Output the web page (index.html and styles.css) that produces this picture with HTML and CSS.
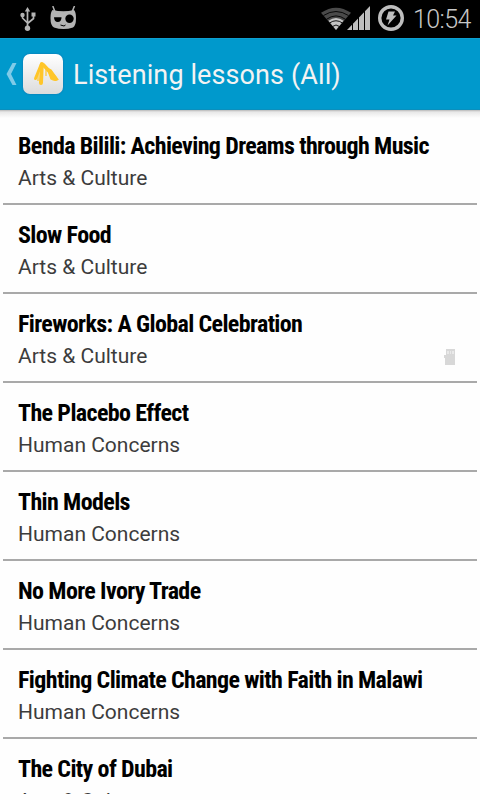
FILE: index.html
```
<!DOCTYPE html>
<html lang="en">
<head>
  <meta charset="UTF-8">
  <meta name="viewport" content="width=device-width, initial-scale=1.0">
  <title>Listening lessons</title>
  <link rel="stylesheet" href="styles.css">
</head>
<body>
  <div class="screen">
    <div class="status-bar">
      <svg class="usb" width="18" height="26" viewBox="0 0 18 26">
        <path d="M7.500 4v17M2.500 9.500v2.500l5 5M13.500 9v3.500l-6 5" fill="none" stroke="#b4b4b4" stroke-width="1.700"/>
        <path d="M7.500 1l2.700 4.500H4.800zM11.500 6.500h4v4h-4z" fill="#b4b4b4"/>
        <circle cx="2.500" cy="9" r="2.200" fill="#b4b4b4"/>
        <circle cx="7.500" cy="22.300" r="2.700" fill="#b4b4b4"/>
      </svg>
      <svg class="cid" width="28" height="26" viewBox="0 0 28 26">
        <path d="M2.800 0l2.200 6M24.500 0l-2.500 6" stroke="#b4b4b4" stroke-width="1.500"/>
        <path d="M2.500 4Q13.500 6.500 24 4Q26 6 26 12Q26 20 23 21.500Q13.500 24.500 4 21.500Q.5 20 .5 12Q.5 6 2.500 4z" fill="#b4b4b4"/>
        <path d="M4 11.300h7.500q0 4.700-3.700 4.700T4 11.300z" fill="#000"/>
        <circle cx="19.500" cy="12.700" r="4.200" fill="#000"/>
        <path d="M10.500 19l3.500 1 1.500-1" fill="none" stroke="#000"/>
      </svg>
      <span class="spacer"></span>
      <svg class="wifi" width="30" height="24" viewBox="0 0 30 24">
        <path d="M0 5.800Q15-4.500 30 5.800L15 23z" fill="#4a4a4a"/>
        <path d="M7.500 13.700Q15 8.500 22.500 13.700L15 23z" fill="#c4c4c4"/>
        <path d="M2.500 8.500Q15 .5 27.500 8.500M5.500 12.300Q15 5.500 24.500 12.300M8.500 16Q15 11.500 21.500 16M11.500 19.500Q15 16.500 18.500 19.500" fill="none" stroke="#000" stroke-width=".9"/>
      </svg>
      <svg class="signal" width="24" height="24" viewBox="0 0 24 24">
        <path d="M0 24L23 0V24z" fill="#bebebe"/>
        <path d="M5.500 15v9M11.500 8v16M17.500 2v22" stroke="#000" stroke-width="1"/>
      </svg>
      <svg class="battery" width="26" height="26" viewBox="0 0 26 26">
        <circle cx="13" cy="13" r="11.300" fill="none" stroke="#bebebe" stroke-width="3.400"/>
        <path d="M10.500 6.500h6.500l-2 4h3.500L9.500 20.500l2-6H8z" fill="#bebebe"/>
      </svg>
      <span class="clock">10:54</span>
    </div>

    <div class="action-bar">
      <svg class="back" width="11" height="22" viewBox="0 0 11 22">
        <path d="M6.500 0H10.500L5 11l5.500 11H6.500L.5 11z" fill="#7fcbe8"/>
      </svg>
      <div class="app-icon">
        <svg width="40" height="40" viewBox="0 0 40 40">
          <path d="M18 11L12.500 24.500" stroke="#ffc629" stroke-width="3" stroke-linecap="round"/>
          <path d="M18.800 10L18 29" stroke="#ffc629" stroke-width="4" stroke-linecap="round"/>
          <path d="M20.500 11L26 17L32.500 24.500" fill="none" stroke="#ffc629" stroke-width="3.600" stroke-linecap="round"/>
          <path d="M24 14l4 2 7 9.500q-3 2-7-.5zM15 19v8M23 15v7" fill="#ffc629" stroke="#ffc629" stroke-width="1.200"/>
        </svg>
      </div>
      <h1 class="title">Listening lessons (All)</h1>
    </div>

    <div class="lessons">
      <div class="lesson">
        <div class="lesson-title">Benda Bilili: Achieving Dreams through Music</div>
        <div class="lesson-topic">Arts &amp; Culture</div>
      </div>
      <div class="lesson">
        <div class="lesson-title">Slow Food</div>
        <div class="lesson-topic">Arts &amp; Culture</div>
      </div>
      <div class="lesson">
        <div class="lesson-title">Fireworks: A Global Celebration</div>
        <div class="lesson-topic">
          Arts &amp; Culture
          <svg class="saved" width="12" height="16" viewBox="0 0 12 16">
            <path d="M2 0h9v16H1V9H0V6h2z" fill="#d8d8d8"/>
            <path d="M3 2h2v3H3zM6 2h1v3H6zM8 2h2v3H8z" fill="#e9e9e9"/>
          </svg>
        </div>
      </div>
      <div class="lesson">
        <div class="lesson-title">The Placebo Effect</div>
        <div class="lesson-topic">Human Concerns</div>
      </div>
      <div class="lesson">
        <div class="lesson-title">Thin Models</div>
        <div class="lesson-topic">Human Concerns</div>
      </div>
      <div class="lesson">
        <div class="lesson-title">No More Ivory Trade</div>
        <div class="lesson-topic">Human Concerns</div>
      </div>
      <div class="lesson">
        <div class="lesson-title">Fighting Climate Change with Faith in Malawi</div>
        <div class="lesson-topic">Human Concerns</div>
      </div>
      <div class="lesson">
        <div class="lesson-title">The City of Dubai</div>
        <div class="lesson-topic">Arts &amp; Culture</div>
      </div>
    </div>
  </div>
</body>
</html>
```

FILE: styles.css
```
* {
  box-sizing: border-box;
}

body {
  margin: 0;
  font-family: Roboto, Arial, sans-serif;
  background: #fefefe;
  overflow: hidden;
}

svg {
  display: block;
  flex: none;
}

.screen {
  display: flex;
  flex-direction: column;
  width: 480px;
  height: 800px;
  padding-bottom: 6px;
}

/* status bar */
.status-bar {
  display: flex;
  flex: none;
  height: 38px;
  padding: 6px 9px 0 20px;
  background: #000;
}

.cid {
  margin-left: 12px;
}

.spacer {
  flex: 1;
}

.wifi {
  margin-top: 1px;
}

.signal {
  margin-left: -4px;
}

.battery {
  margin: -1px 0 0 7px;
}

.clock {
  width: 58px;
  margin-left: 9px;
  font-size: 25px;
  font-weight: 300;
  line-height: 28px;
  letter-spacing: -0.6px;
  color: #c8c8c8;
  white-space: nowrap;
}

/* action bar */
.action-bar {
  display: flex;
  flex: none;
  align-items: center;
  height: 72px;
  padding-left: 6px;
  background: #0099cc;
  border-top: 1px solid #0d9fd0;
  border-bottom: 1px solid #0a8fbd;
}

.app-icon {
  width: 40px;
  height: 40px;
  margin-left: 6px;
  border-radius: 7px;
  background: linear-gradient(#fff, #dcdcdc);
  box-shadow: 0 0 2px #1668a8;
}

.title {
  margin: 2px 0 0 10px;
  font-size: 27px;
  font-weight: 400;
  letter-spacing: 0.1px;
  color: #f3f3f3;
  white-space: nowrap;
}

/* lesson list */
.lessons {
  flex: 1;
  min-height: 0;
  padding: 6px 3px 0;
  overflow: hidden;
  background: linear-gradient(#b8b8b8, #e8e8e8 2px, #fefefe 8px);
}

.lesson {
  height: 89px;
  padding: 14px 15px 0;
  border-bottom: 2px solid #a9a9a9;
}

.lesson-title {
  font-family: "Roboto Condensed", Roboto, Arial, sans-serif;
  font-stretch: condensed;
  font-size: 24px;
  font-weight: 700;
  line-height: 32px;
  letter-spacing: -0.62px;
  color: #000;
  white-space: nowrap;
}

.lesson-topic {
  display: flex;
  justify-content: space-between;
  font-size: 21px;
  line-height: 32px;
  color: #3c3c3c;
}

.saved {
  margin: 9px 6px 0 0;
}
```
